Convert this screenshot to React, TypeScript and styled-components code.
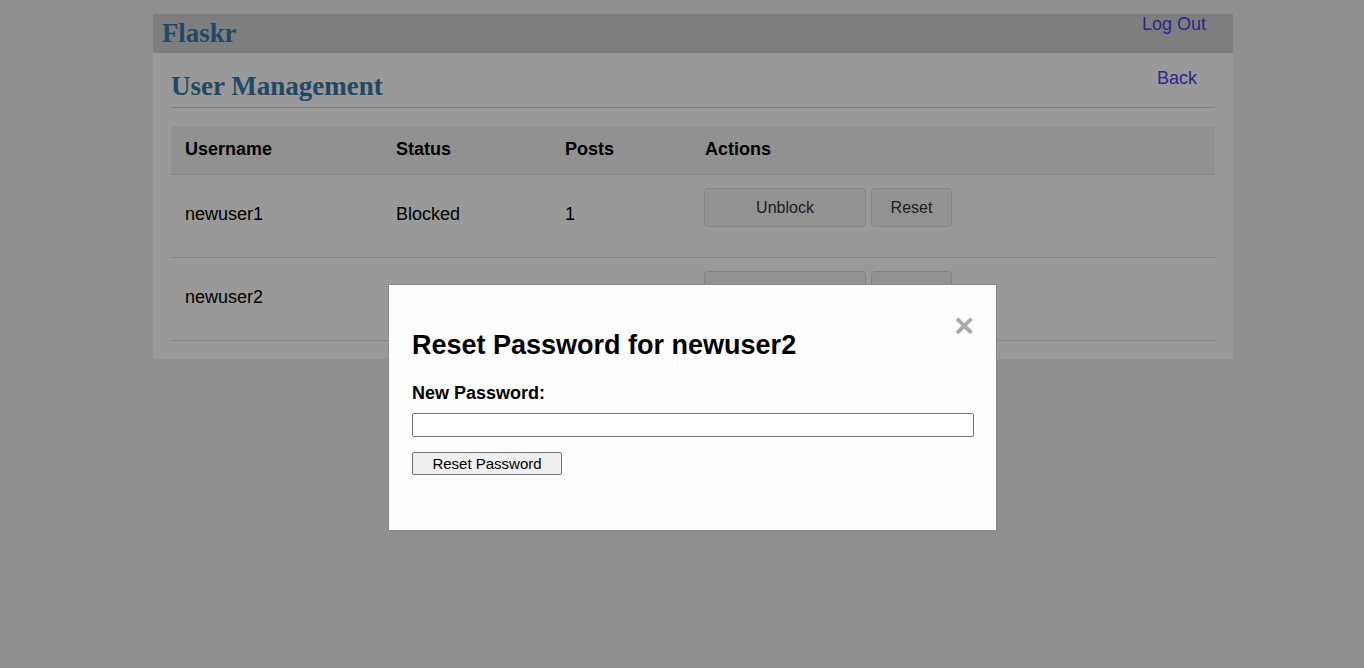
import React from "react";
import styled, { createGlobalStyle } from "styled-components";

const GlobalStyle = createGlobalStyle`
  html { background: #eee; }
  body {
    margin: 0;
    font-family: "Liberation Sans", Arial, sans-serif;
    font-size: 18px;
    color: #000;
  }
`;

const Page = styled.div`
  width: 1080px;
  margin: 14px 0 0 153px;
  background: #fff;
`;

const Nav = styled.nav`
  display: flex;
  align-items: flex-start;
  height: 39px;
  background: lightgray;
  padding: 0 27px 0 9px;
`;

const Brand = styled.h1`
  flex: auto;
  margin: 0;
  font-family: "Liberation Serif", "Times New Roman", serif;
  font-size: 26.8px;
  line-height: 39px;
  color: #377ba8;
`;

const NavLink = styled.a`
  color: #4545ee;
  text-decoration: none;
  font-size: 18px;
  line-height: 21px;
`;

const Content = styled.div`
  padding: 0 18px 18px;
`;

const Header = styled.header`
  display: flex;
  align-items: flex-start;
  border-bottom: 1px solid lightgray;
  height: 54px;
`;

const Title = styled.h1`
  flex: auto;
  margin: 18px 0 0 0;
  font-family: "Liberation Serif", "Times New Roman", serif;
  font-size: 27px;
  line-height: 31px;
  color: #377ba8;
`;

const BackLink = styled.a`
  color: #4545ee;
  text-decoration: none;
  font-size: 18px;
  line-height: 21px;
  margin: 15px 18px 0 0;
`;

const Table = styled.table`
  width: 100%;
  margin-top: 18px;
  border-collapse: collapse;
`;

const Th = styled.th<{ $w?: number }>`
  width: ${(p) => (p.$w ? `${p.$w}px` : "auto")};
  box-sizing: border-box;
  background: #f2f2f2;
  text-align: left;
  font-weight: bold;
  font-size: 18px;
  padding: 0 14px;
  height: 48px;
  border-bottom: 1px solid #ddd;
`;

const Td = styled.td`
  padding: 13px 14px 16px;
  font-size: 18px;
  vertical-align: middle;
  border-bottom: 1px solid #ddd;
  height: 81px;
  box-sizing: border-box;
`;

const Actions = styled.div`
  display: flex;
  gap: 5px;
  margin: 0 0 14px -1px;
`;

const ActionButton = styled.button<{ $w: number }>`
  width: ${(p) => p.$w}px;
  height: 39px;
  box-sizing: border-box;
  background: #f4f4f4;
  border: 1px solid #ddd;
  border-radius: 4px;
  color: #333;
  font-family: "Liberation Sans", Arial, sans-serif;
  font-size: 16px;
  padding: 2px 0 0;
`;

const Overlay = styled.div`
  position: fixed;
  inset: 0;
  background: rgba(0, 0, 0, 0.4);
  display: flex;
  align-items: flex-start;
`;

const Modal = styled.div`
  margin: 284px 0 0 388px;
  width: 609px;
  height: 247px;
  box-sizing: border-box;
  background: #fefefe;
  border: 1px solid #888;
  padding: 21px 22px 20px 23px;
`;

const Close = styled.span`
  float: right;
  color: #aaa;
  font-size: 34px;
  font-weight: bold;
  line-height: 34px;
  margin: 2px 0 0 0;
`;

const ModalTitle = styled.h2`
  margin: 24.4px 0 21.4px;
  font-size: 27px;
  font-weight: bold;
`;

const Label = styled.label`
  display: block;
  font-weight: bold;
  font-size: 18px;
  margin-bottom: 9px;
`;

const Input = styled.input`
  display: block;
  width: 100%;
  height: 24px;
  box-sizing: border-box;
  border: 1px solid #767676;
  border-radius: 2px;
  margin: 0 0 15px;
`;

const SubmitButton = styled.button`
  width: 150px;
  height: 23px;
  box-sizing: border-box;
  background: #efefef;
  border: 1px solid #767676;
  border-radius: 2px;
  font-family: "Liberation Sans", Arial, sans-serif;
  font-size: 15px;
  color: #000;
  padding: 0;
`;

const users = [
  { name: "newuser1", status: "Blocked", posts: 1 },
  { name: "newuser2", status: "Active", posts: 0 },
];

export default function App() {
  return (
    <>
      <GlobalStyle />
      <Page>
        <Nav>
          <Brand>Flaskr</Brand>
          <NavLink href="#">Log Out</NavLink>
        </Nav>
        <Content>
          <Header>
            <Title>User Management</Title>
            <BackLink href="#">Back</BackLink>
          </Header>
          <Table>
            <thead>
              <tr>
                <Th $w={211}>Username</Th>
                <Th $w={169}>Status</Th>
                <Th $w={140}>Posts</Th>
                <Th>Actions</Th>
              </tr>
            </thead>
            <tbody>
              {users.map((u) => (
                <tr key={u.name}>
                  <Td>{u.name}</Td>
                  <Td>{u.status}</Td>
                  <Td>{u.posts}</Td>
                  <Td>
                    <Actions>
                      <ActionButton $w={162}>
                        {u.status === "Blocked" ? "Unblock" : "Block"}
                      </ActionButton>
                      <ActionButton $w={81}>Reset</ActionButton>
                    </Actions>
                  </Td>
                </tr>
              ))}
            </tbody>
          </Table>
        </Content>
      </Page>
      <Overlay>
        <Modal>
          <Close>&times;</Close>
          <ModalTitle>Reset Password for newuser2</ModalTitle>
          <Label htmlFor="pw">New Password:</Label>
          <Input id="pw" type="password" />
          <SubmitButton>Reset Password</SubmitButton>
        </Modal>
      </Overlay>
    </>
  );
}
